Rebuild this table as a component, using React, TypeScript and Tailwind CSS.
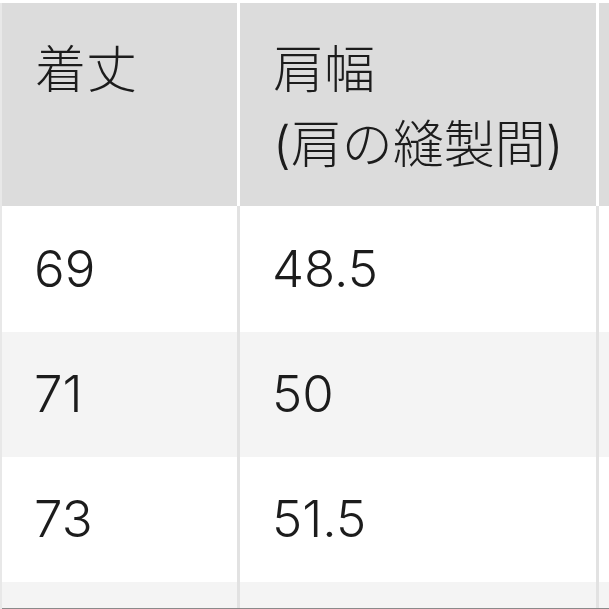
const header = ["着丈", "肩幅\n(肩の縫製間)", ""];

const rows = [
  { length: "69", shoulder: "48.5", bg: "bg-white", h: "h-[126px]" },
  { length: "71", shoulder: "50", bg: "bg-[#f4f4f4]", h: "h-[125px]" },
  { length: "73", shoulder: "51.5", bg: "bg-white", h: "h-[125px]" },
  { length: "", shoulder: "", bg: "bg-[#f4f4f4]", h: "h-[26px]" },
];

export default function App() {
  return (
    <div className="h-[609px] w-[609px] overflow-hidden bg-white pt-[3px] font-['Inter','Noto_Sans_CJK_JP',sans-serif] text-[51px] font-light text-[#1c1c1c]">
      <div className="border-l-2 border-[#e8e8e8]">
        {/* header */}
        <div className="flex h-[203px] bg-[#dcdcdc]">
          <div className="w-[238px] shrink-0 border-r-[3px] border-white pl-[33px] pt-[29px] leading-[75px]">
            {header[0]}
          </div>
          <div className="w-[359px] shrink-0 whitespace-pre-line border-r-[3px] border-white pl-[33px] pt-[29px] leading-[75px]">
            {header[1]}
          </div>
          <div className="flex-1" />
        </div>

        {rows.map((row, i) => (
          <div key={i} className={`flex ${row.h} ${row.bg}`}>
            <div className="flex w-[238px] shrink-0 items-center border-r-[3px] border-[#e2e2e2] pl-[32px]">
              {row.length}
            </div>
            <div className="flex w-[359px] shrink-0 items-center border-r-[3px] border-[#e2e2e2] pl-[32px]">
              {row.shoulder}
            </div>
            <div className="flex-1" />
          </div>
        ))}
        <div className="h-[2px] bg-[#8a8a8a]" />
      </div>
    </div>
  );
}
